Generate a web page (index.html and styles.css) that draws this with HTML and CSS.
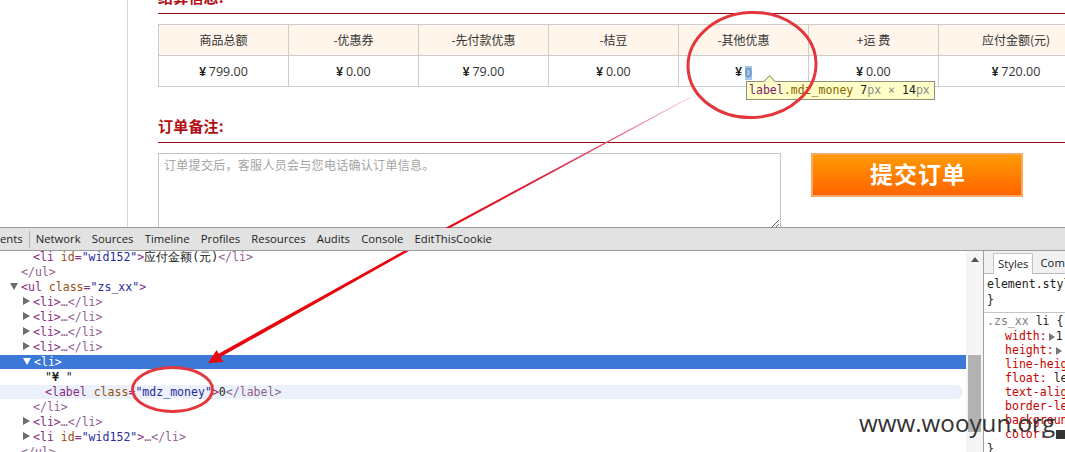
FILE: index.html
```html
<!DOCTYPE html>
<html lang="zh">
<head>
<meta charset="utf-8">
<title>订单</title>
<link rel="stylesheet" href="styles.css">
</head>
<body>
<div class="page">
  <div class="rail"></div>
  <div class="content">
    <h2 class="heading heading-first">结算信息:</h2>
    <div class="summary">
      <div class="cell head">商品总额</div>
      <div class="cell head">-优惠券</div>
      <div class="cell head">-先付款优惠</div>
      <div class="cell head">-桔豆</div>
      <div class="cell head">-其他优惠</div>
      <div class="cell head">+运 费</div>
      <div class="cell head">应付金额(元)</div>
      <div class="cell"><b class="yen">¥</b>799.00</div>
      <div class="cell"><b class="yen">¥</b>0.00</div>
      <div class="cell"><b class="yen">¥</b>79.00</div>
      <div class="cell"><b class="yen">¥</b>0.00</div>
      <div class="cell"><b class="yen">¥</b><span class="picked">0</span></div>
      <div class="cell"><b class="yen">¥</b>0.00</div>
      <div class="cell"><b class="yen">¥</b>720.00</div>
    </div>
    <h2 class="heading heading-second">订单备注:</h2>
    <div class="note-row">
      <textarea class="note" placeholder="订单提交后，客服人员会与您电话确认订单信息。"></textarea>
      <div class="submit">提交订单</div>
    </div>
  </div>
</div>

<div class="devtools">
  <div class="tabs">
    <span class="tab tab-cut">Elements</span>
    <span class="tab">Network</span>
    <span class="tab">Sources</span>
    <span class="tab">Timeline</span>
    <span class="tab">Profiles</span>
    <span class="tab">Resources</span>
    <span class="tab">Audits</span>
    <span class="tab">Console</span>
    <span class="tab">EditThisCookie</span>
  </div>
  <div class="panes">
    <div class="tree">
      <div class="line l2"><span class="t">&lt;li</span> <span class="an">id</span><span class="t">=</span><span class="av">"wid152"</span><span class="t">&gt;</span><span class="tx">应付金额(元)</span><span class="c">&lt;/li&gt;</span></div>
      <div class="line l1"><span class="c">&lt;/ul&gt;</span></div>
      <div class="line l0"><i class="open"></i><span class="t">&lt;ul</span> <span class="an">class</span><span class="t">=</span><span class="av">"zs_xx"</span><span class="t">&gt;</span></div>
      <div class="line l1b"><i class="shut"></i><span class="t">&lt;li&gt;</span><span class="c">…&lt;/li&gt;</span></div>
      <div class="line l1b"><i class="shut"></i><span class="t">&lt;li&gt;</span><span class="c">…&lt;/li&gt;</span></div>
      <div class="line l1b"><i class="shut"></i><span class="t">&lt;li&gt;</span><span class="c">…&lt;/li&gt;</span></div>
      <div class="line l1b"><i class="shut"></i><span class="t">&lt;li&gt;</span><span class="c">…&lt;/li&gt;</span></div>
      <div class="line l1b selected"><i class="open open-white"></i>&lt;li&gt;</div>
      <div class="line l3"><span class="tx">"<b>¥</b> "</span></div>
      <div class="line l3 hovered"><span class="t">&lt;label</span> <span class="an">class</span><span class="t">=</span><span class="av">"mdz_money"</span><span class="t">&gt;</span><span class="tx">0</span><span class="c">&lt;/label&gt;</span></div>
      <div class="line l2"><span class="c">&lt;/li&gt;</span></div>
      <div class="line l1b"><i class="shut"></i><span class="t">&lt;li&gt;</span><span class="c">…&lt;/li&gt;</span></div>
      <div class="line l1b"><i class="shut"></i><span class="t">&lt;li</span> <span class="an">id</span><span class="t">=</span><span class="av">"wid152"</span><span class="t">&gt;</span><span class="c">…&lt;/li&gt;</span></div>
      <div class="line l1"><span class="c">&lt;/ul&gt;</span></div>
    </div>
    <div class="scrollbar">
      <div class="scroll-up"></div>
      <div class="thumb"></div>
    </div>
    <div class="side">
      <div class="side-tabs">
        <span class="side-tab active">Styles</span>
        <span class="side-tab">Computed</span>
      </div>
      <div class="rule rule-element">
        <div class="decl-line">element.style {</div>
        <div class="decl-line">}</div>
      </div>
      <div class="rule">
        <div class="decl-line"><span class="sel">.zs_xx</span> li {</div>
        <div class="prop"><span class="pn">width:</span><i class="mini"></i>1</div>
        <div class="prop"><span class="pn">height:</span><i class="mini"></i></div>
        <div class="prop"><span class="pn">line-height:</span></div>
        <div class="prop"><span class="pn">float:</span> left</div>
        <div class="prop"><span class="pn">text-align:</span></div>
        <div class="prop"><span class="pn">border-left:</span></div>
        <div class="prop"><span class="pn">background:</span></div>
        <div class="prop"><span class="pn">color:</span><i class="swatch"></i></div>
        <div class="decl-line">}</div>
      </div>
    </div>
  </div>
</div>

<div class="tip"><i class="tip-arrow"></i><span class="tip-tag">label</span><span class="tip-class">.mdz_money</span> <span class="tip-num">7</span><span class="tip-unit">px</span> <span class="tip-unit">×</span> <span class="tip-num">14</span><span class="tip-unit">px</span></div>

<svg class="marks" width="1065" height="452" viewBox="0 0 1065 452" aria-hidden="true">
  <defs>
    <linearGradient id="fade" gradientUnits="userSpaceOnUse" x1="690" y1="97" x2="440" y2="232">
      <stop offset="0" stop-color="#f8d0d6"/>
      <stop offset="0.3" stop-color="#e4607a"/>
      <stop offset="0.6" stop-color="#d8203c"/>
      <stop offset="1" stop-color="#e8060e"/>
    </linearGradient>
  </defs>
  <polygon points="690,97 690.4,97.7 448,229 216,359.5 214.4,356 447,227" fill="url(#fade)"/>
  <polygon points="208,363 216.6,350 223.4,362" fill="#e8060e"/>
  <ellipse class="ring" cx="752" cy="65" rx="64" ry="52.5" transform="rotate(-3 752 65)"/>
  <ellipse class="ring" cx="172.5" cy="389.5" rx="40" ry="22"/>
</svg>

<div class="watermark">www.wooyun.org</div>
</body>
</html>
```
FILE: styles.css
```css
html, body {
  margin: 0;
  padding: 0;
}
body {
  position: relative;
  width: 1065px;
  height: 452px;
  overflow: hidden;
  background: #fff;
  font-family: "Open Sans", "Noto Sans CJK SC", sans-serif;
}

/* page under inspection */
.page {
  display: flex;
  height: 227px;
  overflow: hidden;
}
.rail {
  flex: none;
  width: 127px;
  border-right: 1px solid #d4d4d4;
}
.content {
  flex: 1;
  min-width: 0;
  margin-left: 30px;
}
.heading {
  margin: 0;
  height: 28px;
  border-bottom: 1px solid #8f0f14;
  color: #b30d14;
  font: bold 15px/24px "Noto Sans CJK SC", sans-serif;
  letter-spacing: .2px;
}
.heading-first {
  margin-top: -15px;
}
.heading-second {
  margin-top: 27px;
}
.summary {
  display: grid;
  grid-template-columns: repeat(6, 130px) 155px;
  grid-auto-rows: 31px;
  margin-top: 10px;
  border-bottom: 1px solid #ccc;
  width: 935px;
}
.cell {
  box-sizing: border-box;
  border-top: 1px solid #ccc;
  border-left: 1px solid #ccc;
  text-align: center;
  font-size: 12.5px;
  line-height: 31px;
  color: #333;
}
.head {
  background: #fff5ea;
  font-family: "Noto Sans CJK SC", sans-serif;
  font-size: 12px;
  line-height: 30px;
}
.yen {
  margin-right: 3px;
  font-family: "Liberation Sans", sans-serif;
  font-size: 12px;
  color: #222;
}
.picked {
  display: inline-block;
  width: 7px;
  height: 14px;
  line-height: 14px;
  background: #9fc4e8;
  color: #5b7fa8;
  vertical-align: middle;
}
.note-row {
  display: flex;
  gap: 30px;
  margin-top: 10px;
  align-items: flex-start;
}
.note {
  box-sizing: border-box;
  flex: none;
  width: 623px;
  height: 76px;
  margin: 0;
  padding: 3px 5px;
  border: 1px solid #c4c4c4;
  background: #fff;
  font: 12px/16px "Noto Sans CJK SC", sans-serif;
  letter-spacing: .3px;
  outline: none;
}
.note::placeholder {
  color: #a3a3a3;
  opacity: 1;
}
.submit {
  box-sizing: border-box;
  flex: none;
  width: 212px;
  height: 44px;
  padding-left: 2px;
  border: 2px solid #f7a862;
  background: linear-gradient(#ff9a00, #ff6500);
  color: #fff;
  text-align: center;
  font: bold 23px/37px "Noto Sans CJK SC", sans-serif;
  letter-spacing: 1px;
}

/* devtools */
.devtools {
  height: 225px;
  border-top: 1px solid #9a9a9a;
  display: flex;
  flex-direction: column;
  overflow: hidden;
  font-family: "DejaVu Sans Mono", monospace;
}
.tabs {
  flex: none;
  position: relative;
  z-index: 1;
  box-sizing: border-box;
  display: flex;
  height: 23px;
  border-bottom: 1px solid #9a9a9a;
  background: #e2e2e2;
  font: 11.3px/22px "Open Sans", sans-serif;
  color: #222;
  white-space: nowrap;
}
.tab {
  margin-right: 11.2px;
}
.tab-cut {
  height: 17px;
  margin: 3px 6px 0 -26px;
  padding-right: 6px;
  border-right: 1px solid #b5b5b5;
  line-height: 16px;
}
.panes {
  flex: 1;
  display: flex;
  min-height: 0;
}
.tree {
  flex: none;
  width: 966px;
  margin-top: -1px;
  overflow: hidden;
  font-size: 11.55px;
  background: #fff;
}
.line {
  height: 14px;
  margin-bottom: 1px;
  line-height: 14px;
  white-space: pre;
  color: #222;
}
.l0 { padding-left: 10px; }
.l1 { padding-left: 21px; }
.l1b { padding-left: 23px; }
.l2 { padding-left: 33px; }
.l3 { padding-left: 45px; }
.l0 > i { margin-right: 3px; }
.l1b > i { margin-right: 3px; }
.t { color: #8a2b82; }
.c { color: #92608f; }
.an { color: #96500f; }
.av { color: #2a2aa0; }
.tx { color: #222; }
.shut, .open {
  display: inline-block;
  width: 0;
  height: 0;
  vertical-align: 1px;
}
.shut {
  border-left: 7px solid #6c6c6c;
  border-top: 4px solid transparent;
  border-bottom: 4px solid transparent;
}
.open {
  border-top: 7px solid #6c6c6c;
  border-left: 4px solid transparent;
  border-right: 4px solid transparent;
}
.selected {
  background: #3b78d8;
  color: #fff;
}
.open-white {
  border-top-color: #fff;
}
.hovered {
  margin-right: 3px;
  border-radius: 0 7px 7px 0;
  background: #eaf1fa;
}
.scrollbar {
  flex: none;
  box-sizing: border-box;
  width: 17px;
  padding: 6px 2px 0;
  background: #f5f5f5;
}
.scroll-up {
  width: 0;
  height: 0;
  margin: 0 auto;
  border-bottom: 5px solid #555;
  border-left: 4px solid transparent;
  border-right: 4px solid transparent;
}
.thumb {
  height: 77px;
  margin-top: 93px;
  background: #b2b2b2;
}
.side {
  flex: 1;
  min-width: 0;
  border-left: 1px solid #a0a0a0;
  overflow: hidden;
  font-size: 11.55px;
  background: #fff;
}
.side-tabs {
  box-sizing: border-box;
  display: flex;
  height: 23px;
  padding: 2px 0 0 9px;
  background: #f1f1f1;
  border-bottom: 1px solid #bdbdbd;
  font: 11.3px/20px "Open Sans", sans-serif;
  color: #222;
  white-space: nowrap;
}
.side-tab {
  padding: 0 6px;
}
.side-tab.active {
  box-sizing: border-box;
  height: 21px;
  margin-right: 1px;
  padding: 0 4px;
  background: #fff;
  border: 1px solid #c4c4c4;
  border-bottom: 0;
}
.rule {
  padding: 0 0 0 3px;
  white-space: nowrap;
}
.rule-element {
  box-sizing: border-box;
  height: 39px;
  padding-top: 2px;
  border-bottom: 1px solid #c4c4c4;
}
.decl-line {
  height: 16px;
  line-height: 16px;
  color: #222;
}
.sel {
  color: #808080;
}
.prop {
  height: 14px;
  line-height: 14px;
  padding-left: 18px;
  color: #222;
}
.pn {
  color: #c80000;
}
.mini {
  display: inline-block;
  width: 0;
  height: 0;
  margin: 0 1px 0 2px;
  border-left: 6px solid #777;
  border-top: 4px solid transparent;
  border-bottom: 4px solid transparent;
  vertical-align: -1px;
}
.swatch {
  display: inline-block;
  width: 9px;
  height: 9px;
  margin-left: 9px;
  background: #333;
  vertical-align: -1px;
}

/* overlays */
.tip {
  position: absolute;
  left: 746px;
  top: 81px;
  box-sizing: border-box;
  width: 189px;
  height: 19px;
  padding-left: 2px;
  border: 1px solid #8f8f7a;
  background: #ffffc8;
  font: 11.55px/17px "DejaVu Sans Mono", monospace;
  white-space: nowrap;
}
.tip-arrow {
  position: absolute;
  left: 18px;
  top: -5px;
  width: 8px;
  height: 8px;
  background: #ffffc8;
  border-left: 1px solid #8f8f7a;
  border-top: 1px solid #8f8f7a;
  transform: rotate(45deg);
}
.tip-tag { color: #7b1b74; }
.tip-class { color: #8c6400; }
.tip-num { color: #222; }
.tip-unit { color: #8a8a8a; }
.marks {
  position: absolute;
  left: 0;
  top: 0;
  pointer-events: none;
}
.ring {
  fill: none;
  stroke: #e4373d;
  stroke-width: 3;
}
.watermark {
  position: absolute;
  left: 859px;
  top: 405px;
  font: 24.2px/36px "Open Sans", sans-serif;
  color: #333;
  white-space: nowrap;
}
```
